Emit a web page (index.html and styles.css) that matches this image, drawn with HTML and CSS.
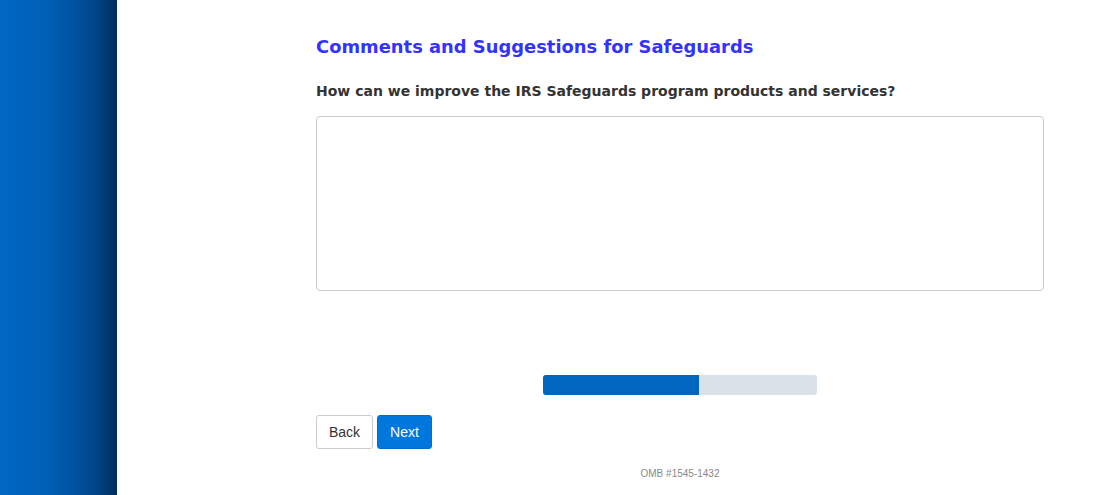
FILE: index.html
```html
<!DOCTYPE html>
<html>
<head>
<meta charset="utf-8">
<link rel="stylesheet" href="styles.css">
</head>
<body>
<div class="page">
  <aside class="sidebar"></aside>
  <main class="main">
    <div class="content">
      <h1 class="title">Comments and Suggestions for Safeguards</h1>
      <p class="question">How can we improve the IRS Safeguards program products and services?</p>
      <textarea class="answer"></textarea>
      <div class="progress-row">
        <div class="progress"><div class="progress-fill" style="width:57%"></div></div>
      </div>
      <div class="buttons">
        <button class="btn btn-back">Back</button>
        <button class="btn btn-next">Next</button>
      </div>
      <div class="omb">OMB #1545-1432</div>
    </div>
  </main>
</div>
</body>
</html>
```
FILE: styles.css
```css
html, body {
  margin: 0;
  padding: 0;
  background: #fff;
}
.page {
  display: flex;
  height: 495px;
  overflow: hidden;
}
.sidebar {
  width: 117px;
  flex: none;
  background: linear-gradient(to right, #0068c4 0%, #005fb4 40%, #0052a0 65%, #00427f 85%, #002f5c 100%);
}
.main {
  flex: 1;
  padding-left: 199px;
  padding-right: 50px;
}
.content {
  width: 728px;
  display: flex;
  flex-direction: column;
}
.title {
  margin: 36px 0 0;
  font-family: Verdana, "DejaVu Sans", sans-serif;
  font-size: 17.9px;
  font-weight: bold;
  color: #3333ff;
  line-height: 22px;
}
.question {
  margin: 24px 0 0;
  font-family: Verdana, "DejaVu Sans", sans-serif;
  font-size: 14px;
  font-weight: bold;
  color: #333;
  line-height: 18px;
}
.answer {
  margin: 16px 0 0;
  width: 728px;
  height: 175px;
  box-sizing: border-box;
  border: 1px solid #ccc;
  border-radius: 4px;
  resize: none;
  padding: 6px 12px;
  font-family: "Liberation Sans", Arial, sans-serif;
}
.progress-row {
  display: flex;
  justify-content: center;
  margin-top: 84px;
}
.progress {
  width: 274px;
  height: 20px;
  background: #d9e2e9;
  border-radius: 3px;
  overflow: hidden;
}
.progress-fill {
  height: 100%;
  background: #0066c0;
}
.buttons {
  display: flex;
  gap: 4px;
  margin-top: 20px;
}
.btn {
  height: 34px;
  box-sizing: border-box;
  border-radius: 3px;
  font-family: "Liberation Sans", Arial, sans-serif;
  font-size: 14px;
  padding: 0 12px;
  cursor: pointer;
}
.btn-back {
  width: 57px;
  background: #fff;
  border: 1px solid #ccc;
  color: #333;
}
.btn-next {
  width: 55px;
  background: #0077dd;
  border: 1px solid #0070d0;
  color: #fff;
}
.omb {
  margin-top: 19px;
  text-align: center;
  font-family: "Liberation Sans", Arial, sans-serif;
  font-size: 10px;
  color: #888;
  line-height: 12px;
}
```
